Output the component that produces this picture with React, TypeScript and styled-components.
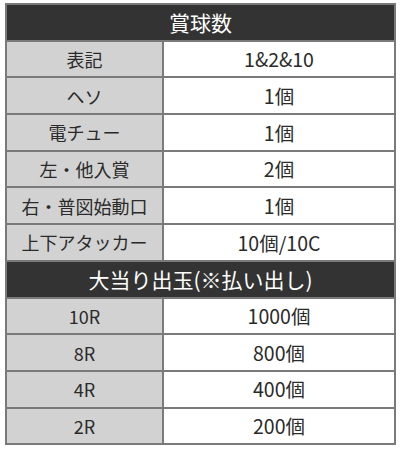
import * as React from 'react';
import styled, { createGlobalStyle } from 'styled-components';

const GlobalStyle = createGlobalStyle`
    html, body {
        margin: 0;
        padding: 0;
        background: #fff;
    }
    body {
        font-family: "Noto Sans CJK JP", "Noto Sans", sans-serif;
    }
`;

interface IRow {
    label: string;
    value: string;
}

const prizeRows: IRow[] = [
    { label: '表記', value: '1&2&10' },
    { label: 'ヘソ', value: '1個' },
    { label: '電チュー', value: '1個' },
    { label: '左・他入賞', value: '2個' },
    { label: '右・普図始動口', value: '1個' },
    { label: '上下アタッカー', value: '10個/10C' },
];

const payoutRows: IRow[] = [
    { label: '10R', value: '1000個' },
    { label: '8R', value: '800個' },
    { label: '4R', value: '400個' },
    { label: '2R', value: '200個' },
];

const Wrapper = styled.div`
    padding: 3px 4px 0 5px;
`;

const Table = styled.table`
    width: 391px;
    border-collapse: collapse;
    table-layout: fixed;
    border: 2px solid #7a7a7a;
`;

const HeadCell = styled.th`
    height: 34.7px;
    padding: 0;
    background: #333333;
    color: #ffffff;
    font-size: 21px;
    font-weight: normal;
    line-height: 1;
    text-align: center;
    border: 2px solid #7a7a7a;
`;

const LabelCell = styled.td`
    height: 34.7px;
    padding: 0;
    background: #d2d2d2;
    color: #2a2a2a;
    font-size: 18px;
    line-height: 1;
    text-align: center;
    border: 2px solid #7a7a7a;
`;

const ValueCell = styled.td`
    height: 34.7px;
    padding: 0;
    background: #ffffff;
    color: #2a2a2a;
    font-size: 19.5px;
    line-height: 1;
    text-align: center;
    border: 2px solid #7a7a7a;
`;

const Section: React.FC<{ title: string; rows: IRow[] }> = ({ title, rows }) => (
    <>
        <tr>
            <HeadCell colSpan={2}>{title}</HeadCell>
        </tr>
        {rows.map(r => (
            <tr key={r.label}>
                <LabelCell>{r.label}</LabelCell>
                <ValueCell>{r.value}</ValueCell>
            </tr>
        ))}
    </>
);

const App: React.FC = () => (
    <Wrapper>
        <GlobalStyle />
        <Table>
            <colgroup>
                <col style={{ width: 157 }} />
                <col />
            </colgroup>
            <tbody>
                <Section title="賞球数" rows={prizeRows} />
                <Section title="大当り出玉(※払い出し)" rows={payoutRows} />
            </tbody>
        </Table>
    </Wrapper>
);

export default App;
